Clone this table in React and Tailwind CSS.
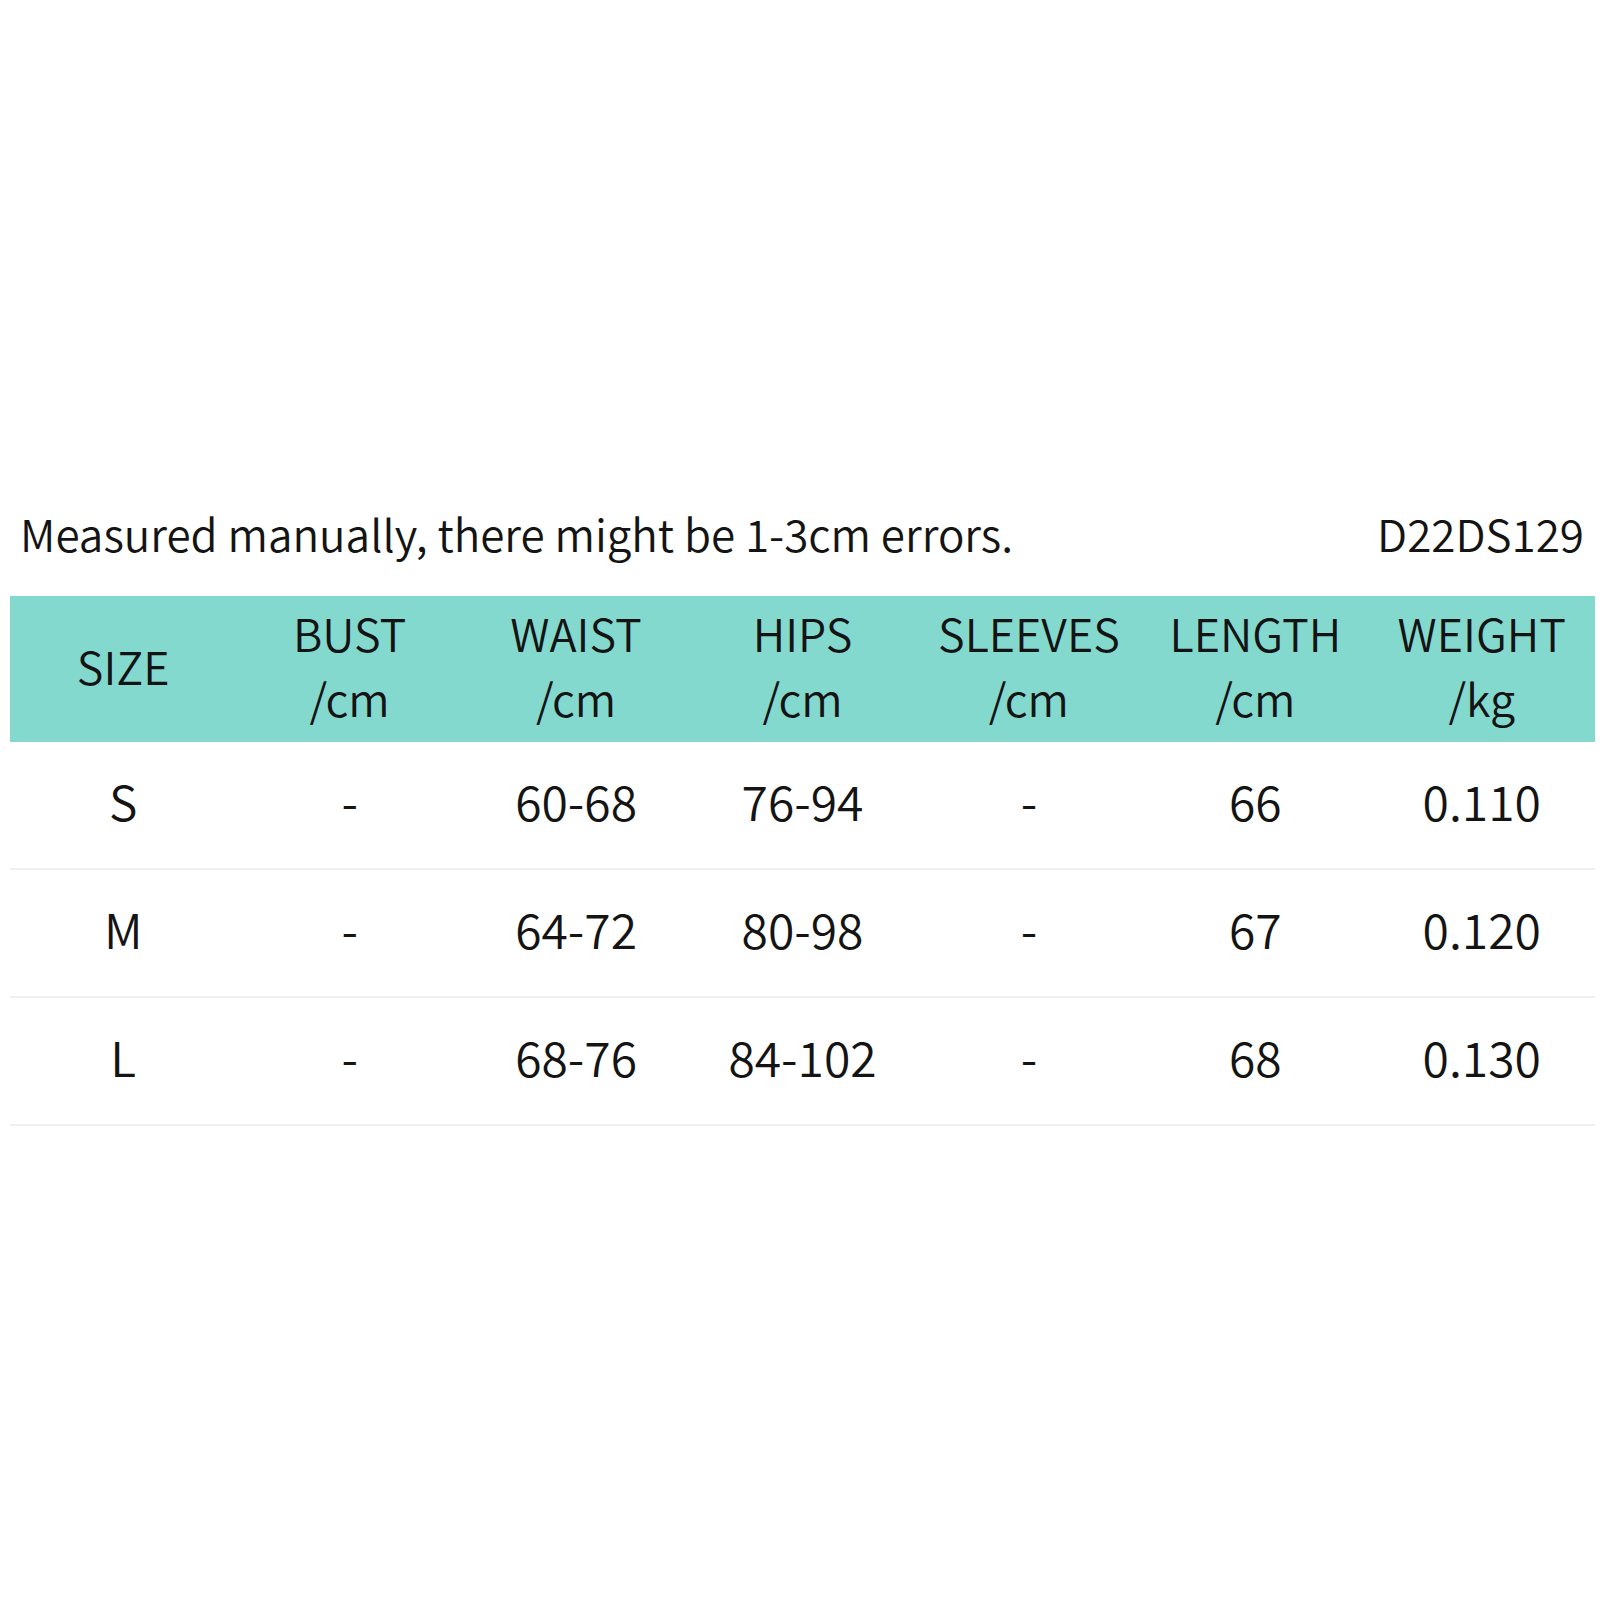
import React from 'react';

const columns = [
    { title: 'SIZE' },
    { title: 'BUST', unit: '/cm' },
    { title: 'WAIST', unit: '/cm' },
    { title: 'HIPS', unit: '/cm' },
    { title: 'SLEEVES', unit: '/cm' },
    { title: 'LENGTH', unit: '/cm' },
    { title: 'WEIGHT', unit: '/kg' },
];

const rows = [
    ['S', '-', '60-68', '76-94', '-', '66', '0.110'],
    ['M', '-', '64-72', '80-98', '-', '67', '0.120'],
    ['L', '-', '68-76', '84-102', '-', '68', '0.130'],
];

const font = { fontFamily: '"Noto Sans CJK SC", "Noto Sans", sans-serif' };

export default function App() {
    return (
        <div className="w-[1600px] h-[1600px] bg-white text-[#141414] font-[350]" style={font}>
            <div className="pt-[500px] pl-[10px] pr-[5px]">
                {/* Légende */}
                <div className="flex items-center justify-between pl-[10px] pr-[11px] h-[66px]">
                    <span className="text-[44px] leading-none">Measured manually, there might be 1-3cm errors.</span>
                    <span className="text-[44px] leading-none">D22DS129</span>
                </div>

                <div className="mt-[30px]">
                    {/* En-tête */}
                    <div className="grid grid-cols-7 h-[146px] bg-[#84d9cf]">
                        {columns.map((col) => (
                            <div key={col.title} className="flex flex-col items-center justify-center pb-[8px] text-[45px] leading-[65px]">
                                <span>{col.title}</span>
                                {col.unit && <span>{col.unit}</span>}
                            </div>
                        ))}
                    </div>

                    {/* Lignes */}
                    {rows.map((row) => (
                        <div key={row[0]} className="grid grid-cols-7 h-[128px] border-b-2 border-[#efefef]">
                            {row.map((cell, i) => (
                                <div key={i} className="flex items-center justify-center pb-[10px] text-[48px] leading-none">
                                    {cell}
                                </div>
                            ))}
                        </div>
                    ))}
                </div>
            </div>
        </div>
    );
}
